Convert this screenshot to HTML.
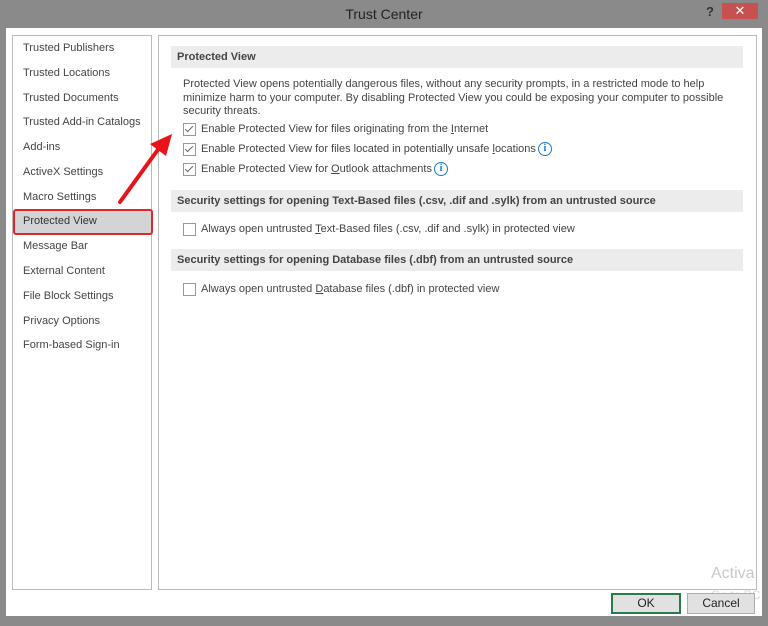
<!DOCTYPE html>
<html><head><style>
body{margin:0;width:768px;height:626px;background:#8a8a8a;font-family:"Liberation Sans",sans-serif;font-size:11px;color:#444;position:relative;overflow:hidden}
.a{position:absolute}
.title{left:0;top:6px;width:768px;text-align:center;font-size:14px;color:#222}
.dlg{left:6px;top:28px;width:756px;height:588px;background:#fff}
.lp{left:12px;top:35px;width:138px;height:553px;border:1px solid #bbb;background:#fff}
.rp{left:158px;top:35px;width:597px;height:553px;border:1px solid #bbb;background:#fff}
.li{position:absolute;left:23px;font-size:11px;color:#444}
.hd{position:absolute;left:171px;width:566px;height:22px;background:#ececec;font-weight:bold;color:#444;line-height:22px;padding-left:6px}
.t{position:absolute;left:183px;color:#444}
.cb{position:absolute;left:183px;width:11px;height:11px;border:1px solid #999;background:#fff}
.cb.c::after{content:"";position:absolute;left:3px;top:0px;width:3px;height:7px;border:solid #666;border-width:0 1px 1px 0;transform:rotate(45deg)}
.ct{position:absolute;left:201px;color:#444}
.info{display:inline-block;width:12px;height:12px;border:1.5px solid #1e78c8;border-radius:50%;color:#1e78c8;font-size:10px;font-weight:bold;text-align:center;line-height:12px;vertical-align:middle;margin-left:2px;font-family:"Liberation Serif",serif}
.btn{position:absolute;top:593px;width:66px;height:19px;background:#e1e1e1;border:1px solid #adadad;text-align:center;line-height:19px;font-size:12px;color:#222}
</style></head><body>
<div class="a title">Trust Center</div>
<div class="a" style="left:706px;top:4px;font-size:13px;font-weight:bold;color:#333">?</div>
<div class="a" style="left:722px;top:3px;width:36px;height:16px;background:#c75050;color:#fff;text-align:center;line-height:16px;font-size:13px">✕</div>
<div class="a dlg"></div>
<div class="a lp"></div>
<div class="a rp"></div>
<div class="li" style="top:42px">Trusted Publishers</div>
<div class="li" style="top:67px">Trusted Locations</div>
<div class="li" style="top:92px">Trusted Documents</div>
<div class="li" style="top:116px">Trusted Add-in Catalogs</div>
<div class="li" style="top:141px">Add-ins</div>
<div class="li" style="top:166px">ActiveX Settings</div>
<div class="li" style="top:191px">Macro Settings</div>
<div class="a" style="left:13px;top:209px;width:136px;height:22px;background:#d4d4d4;border:2px solid #e0262a;border-radius:3px"></div>
<div class="li" style="top:215px;color:#333">Protected View</div>
<div class="li" style="top:240px">Message Bar</div>
<div class="li" style="top:265px">External Content</div>
<div class="li" style="top:290px">File Block Settings</div>
<div class="li" style="top:315px">Privacy Options</div>
<div class="li" style="top:339px">Form-based Sign-in</div>

<div class="hd" style="top:46px">Protected View</div>
<div class="t" style="top:78px;width:560px;line-height:13.5px">Protected View opens potentially dangerous files, without any security prompts, in a restricted mode to help minimize harm to your computer. By disabling Protected View you could be exposing your computer to possible security threats.</div>
<div class="cb c" style="top:123px"></div><div class="ct" style="top:123px">Enable Protected View for files originating from the <u>I</u>nternet</div>
<div class="cb c" style="top:143px"></div><div class="ct" style="top:142px">Enable Protected View for files located in potentially unsafe <u>l</u>ocations<span class="info">i</span></div>
<div class="cb c" style="top:163px"></div><div class="ct" style="top:162px">Enable Protected View for <u>O</u>utlook attachments<span class="info">i</span></div>
<div class="hd" style="top:190px">Security settings for opening Text-Based files (.csv, .dif and .sylk) from an untrusted source</div>
<div class="cb" style="top:223px"></div><div class="ct" style="top:223px">Always open untrusted <u>T</u>ext-Based files (.csv, .dif and .sylk) in protected view</div>
<div class="hd" style="top:249px">Security settings for opening Database files (.dbf) from an untrusted source</div>
<div class="cb" style="top:283px"></div><div class="ct" style="top:283px">Always open untrusted <u>D</u>atabase files (.dbf) in protected view</div>

<svg class="a" style="left:110px;top:130px" width="70" height="80"><line x1="10" y1="72" x2="52" y2="14" stroke="#e8141a" stroke-width="4" stroke-linecap="round"/><polygon points="62,4 40,14 56,26" fill="#e8141a"/></svg>

<div class="a" style="left:711px;top:565px;font-size:16px;color:#c8c8c8">Activa</div>
<div class="a" style="left:711px;top:588px;font-size:12px;color:#d8d8d8">Go to PC</div>
<div class="btn" style="left:611px;border:2px solid #2a7a4a;height:17px;line-height:17px">OK</div>
<div class="btn" style="left:687px">Cancel</div>
</body></html>
